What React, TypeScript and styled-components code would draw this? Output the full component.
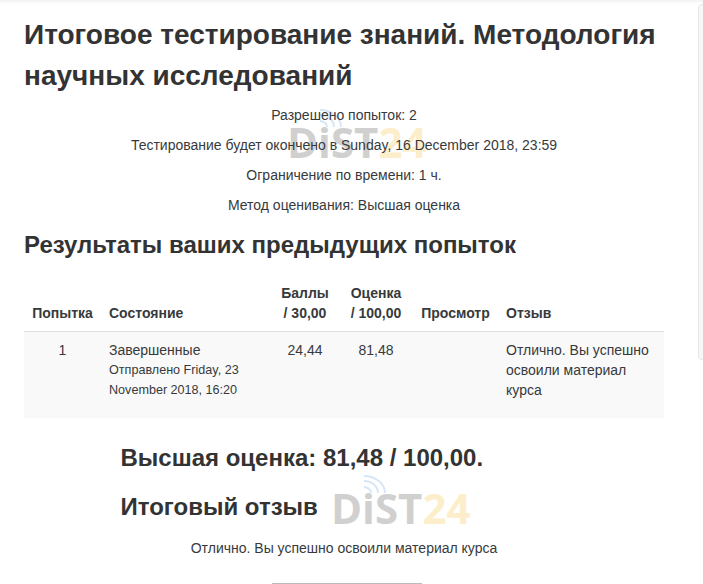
import React from 'react';
import styled, { createGlobalStyle } from 'styled-components';

const GlobalStyle = createGlobalStyle`
  html, body {
    margin: 0;
    padding: 0;
    background: #fff;
    height: 584px;
    overflow: hidden;
  }
  body {
    font-family: "Liberation Sans", Arial, sans-serif;
    font-size: 14px;
    line-height: 20px;
    color: #373a3c;
  }
`;

const Page = styled.div`
  position: relative;
  width: 703px;
  height: 584px;
  overflow: hidden;
  background: linear-gradient(#f2f2f2, #fff 4px);
`;

const SidePanel = styled.div`
  position: absolute;
  top: 4px;
  left: 698px;
  width: 20px;
  height: 356px;
  background: #f7f7f7;
  border: 1px solid #e6e6e6;
  border-radius: 4px;
  box-sizing: border-box;
`;

const Content = styled.main`
  width: 640px;
  margin-left: 24px;
  padding-top: 14px;
`;

const Title = styled.h1`
  margin: 0 0 9px;
  font-size: 28px;
  line-height: 41px;
  font-weight: 700;
  color: #333;
`;

const Info = styled.p`
  position: relative;
  margin: 0 0 10px;
  text-align: center;
`;

const Intro = styled.div`
  position: relative;
`;

const Watermark = styled.div<{ $top: number; $left: number }>`
  position: absolute;
  top: ${(p) => p.$top}px;
  left: ${(p) => p.$left}px;
  width: 136px;
  height: 50px;
  pointer-events: none;
  font-family: "Open Sans", "Liberation Sans", sans-serif;
  font-size: 42px;
  line-height: 50px;
  font-weight: 700;
  color: #d0d0d0;
  white-space: nowrap;

  span {
    color: #fdeecb;
  }
  svg {
    position: absolute;
    top: -9px;
    left: 32px;
  }
`;

const Heading = styled.h2`
  margin: 13px 0 0;
  font-size: 24px;
  line-height: 34px;
  font-weight: 700;
  color: #333;
`;

const Table = styled.table`
  width: 640px;
  margin-top: 13px;
  border-collapse: collapse;
  table-layout: fixed;

  th {
    padding: 8px;
    vertical-align: bottom;
    border-bottom: 1px solid #dddddd;
    font-weight: 700;
    text-align: left;
    color: #373a3c;
  }
  td {
    padding: 8px 8px 18px;
    vertical-align: top;
    background: #f9f9f9;
  }
`;

const CenterCell = styled.td`
  text-align: center;
`;

const CenterHead = styled.th`
  && {
    text-align: center;
  }
`;

const Small = styled.div`
  font-size: 12.6px;
`;

const Summary = styled.div`
  position: relative;
  margin-top: 20px;
`;

const BestGrade = styled.h3`
  margin: 0 0 12px 96.5px;
  font-size: 24px;
  line-height: 40px;
  font-weight: 700;
  color: #333;
`;

const FeedbackTitle = styled.h3`
  margin: 0 0 14px 96.5px;
  font-size: 24px;
  line-height: 34px;
  font-weight: 700;
  color: #333;
`;

const Rule = styled.hr`
  width: 150px;
  margin: 25px 0 0 248px;
  border: 0;
  border-top: 1px solid #bbb;
`;

function Logo({ top, left }: { top: number; left: number }) {
  return (
    <Watermark $top={top} $left={left}>
      <svg width="24" height="20" viewBox="0 0 24 20" fill="none" stroke="#d6e6f8" strokeWidth="2">
        <path d="M1 13 A7 6 0 0 1 8 19" />
        <path d="M1 7 A14 12 0 0 1 15 19" />
        <path d="M1 2 A21 17 0 0 1 22 19" />
      </svg>
      DiST<span>24</span>
    </Watermark>
  );
}

export default function App() {
  return (
    <Page>
      <GlobalStyle />
      <SidePanel />
      <Content>
        <Title>Итоговое тестирование знаний. Методология научных исследований</Title>
        <Intro>
          <Logo top={12} left={263} />
          <Info>Разрешено попыток: 2</Info>
          <Info>Тестирование будет окончено в Sunday, 16 December 2018, 23:59</Info>
          <Info>Ограничение по времени: 1 ч.</Info>
          <Info>Метод оценивания: Высшая оценка</Info>
        </Intro>
        <Heading>Результаты ваших предыдущих попыток</Heading>
        <Table>
          <colgroup>
            <col style={{ width: 77 }} />
            <col style={{ width: 170 }} />
            <col style={{ width: 68 }} />
            <col style={{ width: 74 }} />
            <col style={{ width: 85 }} />
            <col style={{ width: 166 }} />
          </colgroup>
          <thead>
            <tr>
              <CenterHead>Попытка</CenterHead>
              <th>Состояние</th>
              <CenterHead>Баллы<br />/ 30,00</CenterHead>
              <CenterHead>Оценка<br />/ 100,00</CenterHead>
              <CenterHead>Просмотр</CenterHead>
              <th>Отзыв</th>
            </tr>
          </thead>
          <tbody>
            <tr>
              <CenterCell>1</CenterCell>
              <td>
                Завершенные
                <Small>Отправлено Friday, 23 November 2018, 16:20</Small>
              </td>
              <CenterCell>24,44</CenterCell>
              <CenterCell>81,48</CenterCell>
              <CenterCell></CenterCell>
              <td>Отлично. Вы успешно освоили материал курса</td>
            </tr>
          </tbody>
        </Table>
        <Summary>
          <Logo top={45} left={307} />
          <BestGrade>Высшая оценка: 81,48 / 100,00.</BestGrade>
          <FeedbackTitle>Итоговый отзыв</FeedbackTitle>
          <Info>Отлично. Вы успешно освоили материал курса</Info>
          <Rule />
        </Summary>
      </Content>
    </Page>
  );
}
